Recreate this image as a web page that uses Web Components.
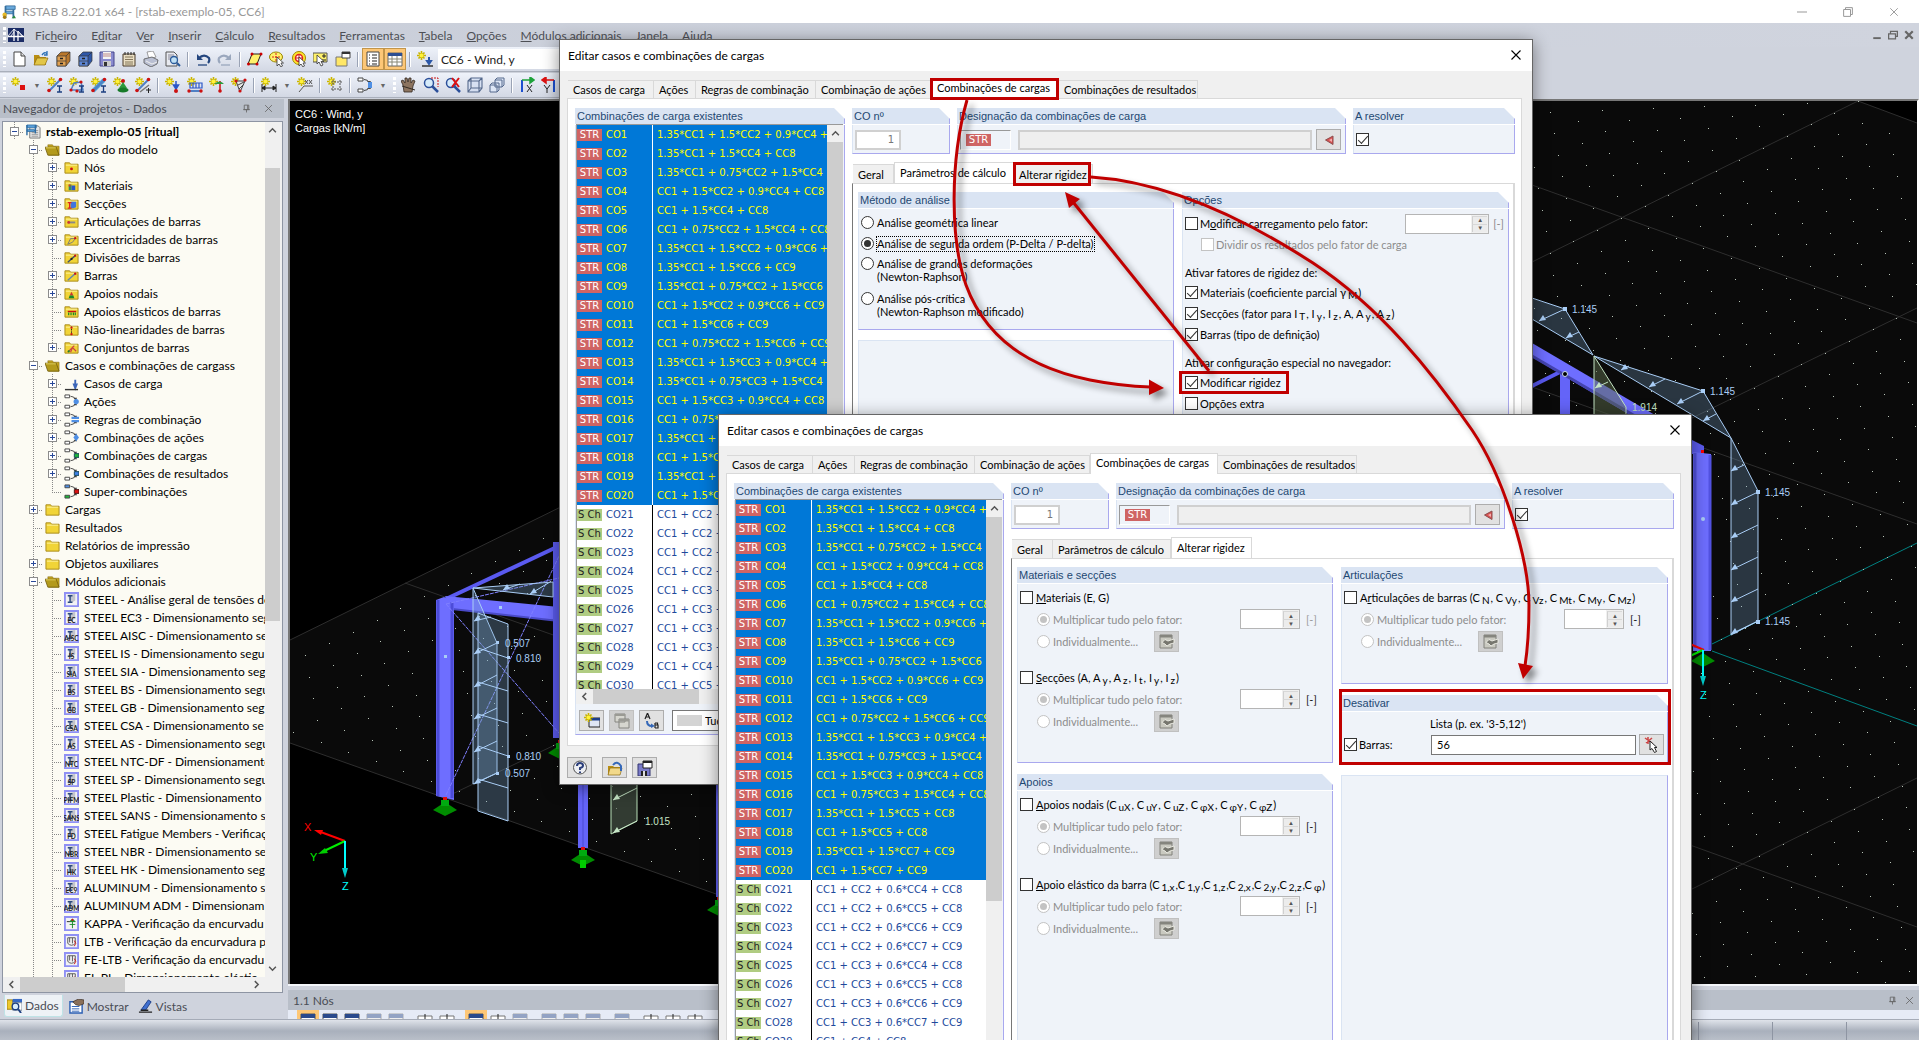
<!DOCTYPE html>
<html lang="pt">
<head>
<meta charset="utf-8">
<title>RSTAB 8.22.01 x64 - [rstab-exemplo-05, CC6]</title>
<style>
html,body{margin:0;height:100%}
body{overflow:hidden;font-family:Lato,"Liberation Sans",sans-serif;font-size:12px;color:#111;background:#cfd3dd}
rs-app{height:100%}
.col{display:flex;flex-direction:column;gap:10px;min-height:0;min-width:0}
.col.wide{gap:11px}
.methods{padding:3px 0 0 2px}
.opt{padding:4px 4px 0 2px;font-size:11px}
.line{display:flex;align-items:center}.fill{flex:1}.unit{margin-left:4px}.off{color:#888}
.cap{margin:8px 0 0;line-height:19px}
.factors{padding:3px 0 0 2px;display:flex;flex-direction:column;gap:15px}
sub{font-size:10px;line-height:0;vertical-align:-2px;margin:0 1px 0 2px}
</style>
</head>
<body>
<rs-app>
  <rs-dialog id="first" style="left:559px;top:39px" subtab="1">
    <div slot="left" class="col">
      <rs-group heading="Método de análise" style="height:138px">
        <div class="methods">
          <rs-choice type="radio">Análise geométrica linear</rs-choice>
          <rs-choice type="radio" checked focused>Análise de segunda ordem (P-Delta / P-delta)</rs-choice>
          <rs-choice type="radio" multi>Análise de grandes deformações<br>(Newton-Raphson)</rs-choice>
          <rs-choice type="radio" multi>Análise pós-crítica<br>(Newton-Raphson modificado)</rs-choice>
        </div>
      </rs-group>
      <rs-group style="flex:1"></rs-group>
    </div>
    <div slot="right" class="col">
      <rs-group heading="Opções" style="flex:1">
        <div class="opt">
          <div class="line"><rs-choice type="checkbox">M<u>o</u>dificar carregamento pelo fator:</rs-choice><span class="fill"></span><rs-spin wide label="Fator do carregamento"></rs-spin><span class="unit off">[-]</span></div>
          <rs-choice type="checkbox" disabled style="padding-left:16px">Dividir os resultados pelo fator de carga</rs-choice>
          <p class="cap">Ativar fatores de rigidez de:</p>
          <rs-choice type="checkbox" checked>Materiais (coeficiente parcial γ<sub>M</sub>)</rs-choice>
          <rs-choice type="checkbox" checked>Secções (fator para I<sub>T</sub>, I<sub>y</sub>, I<sub>z</sub>, A, A<sub>y</sub>, A<sub>z</sub>)</rs-choice>
          <rs-choice type="checkbox" checked>Barras (tipo de definição)</rs-choice>
          <p class="cap">Ativar configuração especial no navegador:</p>
          <rs-choice type="checkbox" checked>Modificar rigidez</rs-choice>
          <rs-choice type="checkbox">Opções extra</rs-choice>
        </div>
      </rs-group>
    </div>
  </rs-dialog>

  <rs-dialog id="second" style="left:718px;top:414px" subtab="2">
    <div slot="left" class="col wide">
      <rs-group heading="Materiais e secções" style="height:196px">
        <div class="factors">
          <rs-factor><u>M</u>ateriais (E, G)</rs-factor>
          <rs-factor on><u>S</u>ecções (A, A<sub>y</sub>, A<sub>z</sub>, I<sub>t</sub>, I<sub>y</sub>, I<sub>z</sub>)</rs-factor>
        </div>
      </rs-group>
      <rs-group heading="Apoios" style="flex:1">
        <div class="factors">
          <rs-factor on><u>A</u>poios nodais (C<sub>uX</sub>, C<sub>uY</sub>, C<sub>uZ</sub>, C<sub>φX</sub>, C<sub>φY</sub>, C<sub>φZ</sub>)</rs-factor>
          <rs-factor on><u>A</u>poio elástico da barra (C<sub>1,x</sub>,C<sub>1,y</sub>,C<sub>1,z</sub>,C<sub>2,x</sub>,C<sub>2,y</sub>,C<sub>2,z</sub>,C<sub>φ</sub>)</rs-factor>
        </div>
      </rs-group>
    </div>
    <div slot="right" class="col wide">
      <rs-group heading="Articulações" style="height:117px">
        <div class="factors">
          <rs-factor on>A<u>r</u>ticulações de barras (C<sub>N</sub>, C<sub>Vy</sub>, C<sub>Vz</sub>, C<sub>Mt</sub>, C<sub>My</sub>, C<sub>Mz</sub>)</rs-factor>
        </div>
      </rs-group>
      <rs-group heading="Desativar" style="height:69px">
        <rs-member-list></rs-member-list>
      </rs-group>
      <rs-group style="flex:1"></rs-group>
    </div>
  </rs-dialog>
  <rs-annotations></rs-annotations>
</rs-app>

<script>
const define = (name, css, html) => customElements.define(name, class extends HTMLElement {
  connectedCallback() {
    if (this.shadowRoot) return;
    const root = this.attachShadow({ mode: 'open' });
    root.innerHTML = `<style>*{box-sizing:border-box}${css}</style>${typeof html === 'function' ? html(this) : html}`;
  }
});

const STAR = '<path d="M4.500 0v9M0 4.500h9M1.500 1.500l6 6M7.500 1.500l-6 6" stroke="#c9b400" stroke-width="1.600"/><circle cx="4.500" cy="4.500" r="2" fill="#fff23a"/>';
const FOLD = '<path d="M1 3h5l1 1.500h8V14H1z" fill="#f1d437" stroke="#a88a1c"/><path d="M2 5.500h12" stroke="#fdf3a0"/>';
const COMB = c => `<g fill="#fff" stroke="#444">${c[1] || '<path d="M1 1h5v3H1zM1 12h5v3H1z"/>'}</g><path d="M7 2.500q4 0 5 3M7 13.500q4 0 5-3" fill="none" stroke="#444"/><path d="M10 4l4 0-1.500 3zM10 12l4 0-1.500-3z" fill="#444"/>${c[0]}`;
const CURSOR = '<path d="M8 6v9l2-2 2 3 1.500-1-1.500-3h2.500z" fill="#fff" stroke="#333" stroke-width=".8"/>';
const MEM = '<path d="M2 14L13 3" stroke="#4f7fc4" stroke-width="2"/><circle cx="2" cy="13.500" r="1.800" fill="#c11"/><circle cx="13.500" cy="2.500" r="1.800" fill="#c11"/>';
const IB = '<path d="M10 9h5M10 15h5M12.500 9v6" stroke="#1d3f80" stroke-width="1.300"/>';
const CAB = (a, b) => `<path d="M2 5l4-4h9v9l-4 5H2z" fill="${b}" stroke="#333" stroke-width=".7"/><path d="M2 5h9v10H2z" fill="${a}" stroke="#333" stroke-width=".7"/><path d="M2 10h9M11 5l4-4" stroke="#333" stroke-width=".7"/><path d="M5 7.500h3M5 12.500h3" stroke="#222" stroke-width="1.400"/>`;
const ICONS = {
  app: '<path d="M4 1h11v4H4zM4 7h9v3H4z" fill="#6aa9dc" stroke="#366f9e"/><path d="M4 1v14M13 5v10" stroke="#366f9e" stroke-width="2"/><circle cx="3" cy="11" r="2.500" fill="#e5b92a"/><circle cx="3" cy="14" r="2" fill="#a57c14"/><path d="M11 15h5l-2-3z" fill="#2c8a3c"/>',
  bridge: '<path d="M0 1h16v14H0z" fill="#1c2d66"/><path d="M0 9.500h16" stroke="#fff" stroke-width="1.500"/><path d="M6 2v12M10 4v10" stroke="#fff" stroke-width="1.300"/><path d="M0 9L6 2l8 7M3 9l3-4M10 4l5 5" fill="none" stroke="#fff" stroke-width=".8"/>',
  new: '<path d="M3 1h7l4 4v10H3z" fill="#fff" stroke="#444"/><path d="M10 1v4h4" fill="#ddd" stroke="#444"/>',
  open: '<path d="M1 14V4h5l1 2h6v8z" fill="#b98e13"/><path d="M1 14l3-7h11l-3 7z" fill="#e2c648" stroke="#8c6a10" stroke-width=".7"/><path d="M9 4q3-4 5-1M14 0v4h-3" fill="none" stroke="#2b6fb4" stroke-width="1.300"/>',
  cabinet: CAB('#e0a050', '#b9772b'), cabinetb: CAB('#5b86d6', '#2e57a8'),
  save: '<path d="M1 1h14v14H1z" fill="#8a8bd0" stroke="#44458a"/><path d="M4 1h8v7H4z" fill="#f4f4f4"/><path d="M4 3h8M4 5h8" stroke="#b88"/><path d="M4 10h8v5H4z" fill="#ccc"/><path d="M5 11h3v4H5z" fill="#333"/>',
  report: '<path d="M2 3h12v12H2z" fill="#eadfc4" stroke="#4a3b28"/><path d="M4 1v3M7 1v3M10 1v3M13 1v3" stroke="#222"/><path d="M4 6h8M4 8.500h8M4 11h8M4 13h8" stroke="#6b5a40" stroke-width=".8"/>',
  print: '<path d="M4 1l6-1 3 6-7 2z" fill="#fff" stroke="#777" stroke-width=".7"/><path d="M1 8l8-2 6 3-1 4-6 3-7-4z" fill="#b9bfd2" stroke="#555" stroke-width=".8"/><path d="M3 10l6 3 5-2" fill="none" stroke="#eee"/>',
  preview: '<path d="M1 1h8l3 3v11H1z" fill="#e8eaf0" stroke="#555"/><path d="M3 4h6M3 6h6M3 8h4" stroke="#889"/><circle cx="9" cy="9" r="3.500" fill="#bfe0f5" stroke="#2a5a9a" stroke-width="1.300"/><path d="M12 12l3 3" stroke="#2a5a9a" stroke-width="2"/>',
  undo: '<path d="M2 3v6h6z" fill="#24467e"/><path d="M3.500 7.500Q9 2 14 7q1 3-1 5" fill="none" stroke="#24467e" stroke-width="2.200"/><path d="M3 14h9" stroke="#24467e" stroke-width="1.300"/>',
  redo: '<path d="M14 3v6H8z" fill="#9aa7bd"/><path d="M12.500 7.500Q7 2 2 7q-1 3 1 5" fill="none" stroke="#9aa7bd" stroke-width="2.200"/><path d="M4 14h9" stroke="#9aa7bd" stroke-width="1.300"/>',
  quad: '<path d="M5 3h9l-4 10H1z" fill="#fff26b" stroke="#222"/><g fill="#c00"><circle cx="5" cy="3" r="1.500"/><circle cx="14" cy="3" r="1.500"/><circle cx="10" cy="13" r="1.500"/><circle cx="1.500" cy="13" r="1.500"/></g>',
  ell: '<ellipse cx="7" cy="6" rx="6.500" ry="5" fill="#fff26b" stroke="#998400"/><path d="M7 2v8M3 6h8" stroke="#d22" stroke-dasharray="2 1"/>' + CURSOR,
  ring: '<circle cx="8" cy="7" r="6.500" fill="#ffe52e" stroke="#a08800"/><circle cx="8" cy="7" r="3.500" fill="#fff" stroke="#d22" stroke-width="1.500"/><path d="M8 4v6M5 7h6" stroke="#d22"/>' + CURSOR,
  selr: '<path d="M0 2h14v9H0z" fill="#fff26b" stroke="#555"/><path d="M11 3v4M9 5h4M9 9h4" stroke="#222"/><path d="M4 4v9l2-2 2 4 2-1-2-3.500h3z" fill="#fff" stroke="#333" stroke-width=".8"/>',
  win: '<path d="M1 6h11v9H1z" fill="#ffe766" stroke="#777"/><path d="M7 1h8v6H7z" fill="#fff" stroke="#444"/><path d="M7 1h8v2H7z" fill="#333"/>',
  tree: '<path d="M2 1h12v14H2z" fill="#fff" stroke="#444"/><path d="M4 4h1M4 7h1M4 10h1M4 13h1M7 4h5M7 7h5M7 10h5M7 13h5" stroke="#222"/>',
  tab: '<path d="M1 2h14v13H1z" fill="#fff" stroke="#666"/><path d="M1 2h14v3H1z" fill="#2d4f92"/><path d="M1 8h14M1 11h14M5 5v10M10 5v10" stroke="#887"/>',
  load: STAR + '<path d="M12 6v5M10 10l2 3 2-3z" stroke="#2b57a8" stroke-width="2" fill="#2b57a8"/><path d="M5 15h11" stroke="#333" stroke-width="1.500"/>',
  node: STAR + '<path d="M9 8h5v5H9z" fill="#d11"/>',
  mem1: STAR + MEM + IB, mem2: STAR + '<path d="M2 13L5 6l7-1 2 8z" fill="none" stroke="#4f7fc4" stroke-width="1.500"/><g fill="#c11"><circle cx="2" cy="13" r="1.600"/><circle cx="12" cy="5" r="1.600"/><circle cx="8" cy="14" r="1.600"/></g>' + IB,
  mem3: STAR + '<path d="M2 14L13 3" stroke="#4fa0d4" stroke-width="4"/>' + MEM + IB,
  supp: STAR + '<circle cx="10" cy="4" r="2" fill="#c11"/><path d="M10 5l4 6H6z" fill="#2c9a3c"/><ellipse cx="10" cy="13" rx="5.500" ry="2.500" fill="#177a2a"/>',
  mem4: STAR + MEM + '<path d="M5 15L14 8" stroke="#777" stroke-width="1.500"/><path d="M11 13h5M13.500 11v5" stroke="#222"/>',
  nload: STAR + '<path d="M11 4v6M8.500 8l2.500 4 2.500-4z" stroke="#2b57c8" stroke-width="1.500" fill="#2b57c8"/><circle cx="11" cy="14" r="2" fill="#c11"/>',
  mload: STAR + '<path d="M3 6h12v5H3zM6 6v5M9 6v5M12 6v5" fill="none" stroke="#2b57c8" stroke-width="1.200"/><path d="M2 14h13" stroke="#4f7fc4" stroke-width="2"/><g fill="#c11"><circle cx="2" cy="14" r="1.700"/><circle cx="14" cy="14" r="1.700"/></g>',
  tload: STAR + '<path d="M11 4v9" stroke="#c11" stroke-width="1.500"/><path d="M5 7q6-5 10 0z" fill="#2c9a3c"/><circle cx="11" cy="14" r="1.800" fill="#c11"/>',
  imp: STAR + '<path d="M5 4h9l-5 11z" fill="#e8e8e8" stroke="#444"/><path d="M7 8l6-3M8 12l5-5" stroke="#444"/><g fill="#c11"><circle cx="5" cy="4" r="1.600"/><circle cx="14" cy="3" r="1.600"/><circle cx="9" cy="14" r="1.600"/></g>',
  dim: STAR + '<path d="M1 7v8M15 7v8M1 11h14M1 11l3-2v4zM15 11l-3-2v4z" stroke="#222" fill="#222"/>',
  note: STAR + '<path d="M2 15l5-6h9" fill="none" stroke="#555"/><path d="M8 3l3 4M11 3L8 7M12 3l3 4M15 3l-3 4" stroke="#555"/>',
  grid: STAR + '<path d="M4 5h12M4 12h12M6 3v12M13 3v12" stroke="#555" stroke-dasharray="2 1"/>',
  comb: COMB(['<path d="M11 5h4v6h-4z" fill="#4f8fe4"/>']),
  hand: '<path d="M3 15L2 8 0 4l2-1 2 3V1h2l1 4 1-4h2v5l2-3 2 1-2 5-1 6z" fill="#8c7460" stroke="#332a22" stroke-width=".8"/><path d="M1 9l13 4" stroke="#332a22"/>',
  zoom: '<circle cx="6" cy="6" r="4.500" fill="#d6ebfa" stroke="#2b4f9a" stroke-width="1.500"/><path d="M9 9l6 6" stroke="#2b4f9a" stroke-width="2.500"/><path d="M8 1h7v9" fill="none" stroke="#c11" stroke-dasharray="2 1"/>',
  zoomx: '<circle cx="6" cy="6" r="4.500" fill="#d6ebfa" stroke="#2b4f9a" stroke-width="1.500"/><path d="M9 9l6 6" stroke="#2b4f9a" stroke-width="2.500"/><path d="M7 1l7 9M14 1L7 10" stroke="#d11" stroke-width="2"/>',
  cube: '<path d="M1 4l3-3h11v10l-3 4H1zM1 4h11v11M12 4l3-3M4 1v10h11M4 11l-3 4" fill="#cfdcf3" fill-opacity=".6" stroke="#55698c" stroke-width="1.100"/>',
  cubes: '<path d="M6 3l2-2h7v7l-2 2H6zM1 8l2-2h7v7l-2 2H1z" fill="#dde6f6" stroke="#55698c"/><path d="M1 8h7v7M6 3h7v7" fill="none" stroke="#55698c"/>',
  ax: '<path d="M3 15V3" stroke="#1c4fd0" stroke-width="2"/><path d="M3 3h10M11 0l4 3-4 3z" stroke="#1da23a" stroke-width="1.500" fill="#1da23a"/><path d="M8 8l5 7M13 8l-5 7" stroke="#222"/>',
  ay: '<path d="M13 15V3" stroke="#1c4fd0" stroke-width="2"/><path d="M13 3H3M5 0L1 3l4 3z" stroke="#d11" stroke-width="1.500" fill="#d11"/><path d="M3 8l3 4M9 8l-3 4v4" stroke="#222" fill="none"/>',
  doc: '<path d="M4 2h9l2 2v11H4z" fill="#e6e6e6" stroke="#777"/><path d="M6 7h7M6 9h7M6 11h7M6 13h7" stroke="#999"/><path d="M1 1h10v3H1zM1 6h8v2H1z" fill="#58a0da" stroke="#2d6ca2" stroke-width=".8"/><path d="M1 1v11M10 1v9" stroke="#2d6ca2" stroke-width="1.500"/>',
  fopen: '<path d="M3 3h5l1 1.500h6V14H4z" fill="#c9a920" stroke="#806a10" stroke-width=".6"/><path d="M0 5.500h12l3 8.500H3z" fill="#b39a1c" stroke="#6d5a0c" stroke-width=".8"/><path d="M1 6.200h10.500" stroke="#e8d660"/>',
  fold: FOLD,
  f1: FOLD + '<circle cx="8" cy="9.500" r="1.500" fill="#c11"/>',
  f2: FOLD + '<path d="M5 7h3v6H5z" fill="#2a8f6a"/><path d="M8 8h4v5H8z" fill="#2b57c8"/><path d="M5 7h2v2H5z" fill="#d33"/>',
  f3: FOLD + '<path d="M7 6h6v6l-3 1H7z" fill="#3f74dd"/><path d="M4 7h4M4 13h4M6 7v6" stroke="#d22" stroke-width="1.300"/>',
  f4: FOLD + '<path d="M4 9h8" stroke="#888" stroke-width="2"/><circle cx="5" cy="9" r="1.500" fill="#c33"/>',
  f5: FOLD + '<path d="M4 13l3-6h5l-3 4z" fill="none" stroke="#777"/><circle cx="12" cy="6.500" r="1.300" fill="#c11"/>',
  f6: FOLD + '<path d="M4 13l8-7" stroke="#456" stroke-width="1.500"/><circle cx="8" cy="9.500" r="1.200" fill="#222"/><circle cx="12" cy="6" r="1.200" fill="#c11"/>',
  f7: FOLD + '<path d="M4 13l8-7" stroke="#68a" stroke-width="1.500"/><circle cx="12" cy="6" r="1.300" fill="#c11"/>',
  f8: FOLD + '<path d="M8 6l2 4H6z" fill="#c33"/><path d="M5 13l1-3h4l1 3z" fill="#178a2a"/>',
  f9: FOLD + '<path d="M4 8h9" stroke="#c11" stroke-width="1.500"/><path d="M5 9v3M7.500 9v3M10 9v3M12 9v3" stroke="#178a2a" stroke-width="1.300"/>',
  f10: FOLD + '<path d="M8 5v8" stroke="#222" stroke-dasharray="1.500 1"/><circle cx="8" cy="6" r="1.200" fill="#c11"/><circle cx="8" cy="13" r="1.200" fill="#c11"/>',
  f11: FOLD + '<path d="M4 13l7-7M7 13l2-5 4 4" fill="none" stroke="#c44" stroke-width="1.300"/><circle cx="5" cy="12" r="1.200" fill="#178a2a"/>',
  lc: '<path d="M12 4v5M10.500 9l1.500 4 1.500-4z" stroke="#3c66b8" stroke-width="2" fill="#3c66b8"/><path d="M1 14.500h14" stroke="#333" stroke-width="1.500"/>',
  c1: COMB(['<circle cx="13" cy="8" r="2.800" fill="#4f8fe4"/>']),
  c2: COMB(['<path d="M8 5h8v2.500H8zM8 8.500h8V11H8z" fill="#4f8fe4"/>']),
  c3: COMB(['<path d="M13 4l3 4-3 4-3-4z" fill="#4f8fe4"/>']),
  c4: COMB(['<path d="M11 6h5v4h-5z" fill="#1fb53a" stroke="#145"/>']),
  c5: COMB(['<path d="M11 6h5v4h-5z" fill="#3f7fe4" stroke="#145"/>']),
  c6: COMB(['<path d="M11 6h5v4h-5z" fill="#d11" stroke="#411"/>', '<path d="M1 1h5v3H1z" fill="#4f8fe4"/><path d="M1 12h5v3H1z" fill="#1fb53a"/>']),
  data: '<path d="M0 2h6v10H0z" fill="#edc92d" stroke="#a08010"/><path d="M6 1h10v4H6z" fill="#3568c4"/><path d="M6 5h10v8H6z" fill="#fff" stroke="#789"/><circle cx="9" cy="9" r="3.500" fill="#d8ecfa" stroke="#1d3f80" stroke-width="1.500"/><path d="M12 12l3 4" stroke="#1d3f80" stroke-width="2"/>',
  show: '<path d="M1 3h13v12H1z" fill="#fff" stroke="#2b5fb4" stroke-width="1.500"/><path d="M3 8h8M3 10.500h8M3 13h8" stroke="#2b5fb4"/><path d="M4 3l6-3 6 1v4l-5 2-4-1z" fill="#8a705a" stroke="#33281e" stroke-width=".7"/>',
  view: '<path d="M3 12L11 1l3 2-6 9z" fill="#3f6fd0" stroke="#1c3d88"/><path d="M1 14h14M3 12h8" stroke="#222" stroke-width="1.500"/>',
  add: '<path d="M5 5h11v9H5z" fill="#dfe6f4" stroke="#222"/><path d="M5 5h11v2.500H5z" fill="#1c3f8a"/>' + STAR,
  copy: '<path d="M1 1h10v8H1zM5 6h10v9H5z" fill="#d6d6cf" stroke="#858580"/><path d="M1 1h10v2H1zM5 6h10v2.500H5z" fill="#9a9a94"/>',
  ab: '<path d="M1 6L3.500 0 6 6M2 4h3M11 10v5M11 10h2.500v2H11h3v3h-3" fill="none" stroke="#222" stroke-width="1.200"/><path d="M3 8q0 5 5 5" fill="none" stroke="#3568b8" stroke-width="2"/><path d="M7 10.500l4 2.500-4 2z" fill="#3568b8"/>',
  help: '<circle cx="8" cy="7.500" r="6.500" fill="#eef0f4" stroke="#555"/><path d="M5 6q0-3 3-3t3 2.500Q11 7.500 8 8v2M8 11.500v1.500" fill="none" stroke="#2a3d7a" stroke-width="2"/>',
  book: '<path d="M1 15V6h5l1 1h6v8z" fill="#b98e13"/><path d="M1 15l2-7h12l-2 7z" fill="#f2d98a" stroke="#8c6a10" stroke-width=".7"/><path d="M6 5q4-5 8 1v5" fill="none" stroke="#3568b8" stroke-width="2"/>',
  saveas: '<path d="M1 4h12v12H1z" fill="#7a7bc8" stroke="#333470"/><path d="M4 11h6v5H4z" fill="#222"/><path d="M6 11h2v5H6z" fill="#ddd"/><path d="M6 1h9v7H6z" fill="#fff" stroke="#222"/><path d="M6 1h9v2H6z" fill="#222"/>',
  play: '<path d="M12 4v8.500L4.500 8z" fill="#d85050" stroke="#8c4f4f"/><path d="M11 6.500v3.500L8 8z" fill="#f5b0b0"/>',
  edit: '<path d="M1 2h12v13H1z" fill="#c9c9c0" stroke="#80807a"/><path d="M1 2h12v2.500H1z" fill="#85857e"/><path d="M3 9.500l3-3 3 1.500 6-2v4l-4 1-3 2-2-2z" fill="#77776f" stroke="#efefe8" stroke-width=".9"/>',
  pick: '<path d="M1 1l7 5M8 1L2 6M4 0v7" stroke="#c44" stroke-width="1.500"/><path d="M6 4v9l2-1.500 2.500 4 2-1-2-4H13z" fill="#fff" stroke="#222"/>',
  x: '<path d="M2 2l12 12M14 2L2 14" stroke="currentColor" stroke-width="1.500" fill="none"/>',
  pin: '<path d="M4 2h8v8H4zM2 10h12M8 10v5M10 2v8" stroke="currentColor" stroke-width="1.500" fill="none"/>',
  min: '<path d="M0 8h16" stroke="currentColor" stroke-width="1.600"/>',
  restore: '<path d="M1 4h11v11H1zM4 4V1h11v11h-3" stroke="currentColor" stroke-width="1.600" fill="none"/>',
  minb: '<path d="M2 13h12" stroke="currentColor" stroke-width="3"/>',
  restoreb: '<path d="M1 6h11v8H1zM4 5V2h11v8h-3" stroke="currentColor" stroke-width="2" fill="none"/>',
  xb: '<path d="M2 2l12 12M14 2L2 14" stroke="currentColor" stroke-width="3.500" fill="none"/>',
  up: '<path d="M2 11l6-6 6 6" stroke="currentColor" stroke-width="2.600" fill="none"/>',
  down: '<path d="M2 5l6 6 6-6" stroke="currentColor" stroke-width="2.600" fill="none"/>',
  left: '<path d="M11 2L5 8l6 6" stroke="currentColor" stroke-width="2.600" fill="none"/>',
  right: '<path d="M5 2l6 6-6 6" stroke="currentColor" stroke-width="2.600" fill="none"/>',
  g1: '<path d="M1 8h14v8H1z" fill="#fff" stroke="#555"/><path d="M1 8h14v4H1z" fill="#2a4a8c"/>',
  g2: '<path d="M1 8h14v8H1z" fill="#eee" stroke="#aaa"/><path d="M1 8h14v4H1z" fill="#93a3c4"/>',
  g3: '<path d="M1 10h14v6H1z" fill="#fff" stroke="#777"/><path d="M8 8v8" stroke="#222"/>'
};
define('rs-icon', ':host{display:block;width:var(--icon,16px);height:var(--icon,16px);flex:none}svg{display:block;width:100%;height:100%}', el => {
  const n = el.getAttribute('name'), m = el.getAttribute('mark');
  if (m !== null) return `<svg viewBox="0 0 16 16" aria-hidden="true"><path d="M1 1h14v14H1z" fill="#f2f2f4" stroke="#8f90f4" stroke-width="2"/>${m[0] === '!' ?
    (m === '!k' ? '<path d="M9 3v10M6 6q3-4 6 0zM6 9h6" stroke="#178a2a" fill="#178a2a"/><circle cx="9" cy="4" r="1.200" fill="#c11"/><path d="M3 6h3" stroke="#222"/>'
    : '<path d="M4 4h8v6q-4 4-8 0zM6 4v5M9 4v6" fill="none" stroke="#555"/><path d="M11 7q3 3 0 6" stroke="#c11" fill="none"/>')
    : `<path d="M4 3l8-1v7l-5 3z" fill="#c2c4cc"/><path d="M4 4h5M6.500 4v6M4 11h5" stroke="#2c4a7c" stroke-width="1.500"/>${m ? `<text x="8" y="14" font-size="7" font-weight="bold" text-anchor="middle" fill="#222">${m}</text>` : ''}`}</svg>`;
  return `<svg viewBox="0 0 16 16" fill="none" aria-hidden="true">${ICONS[n] || ''}</svg>`;
});

define('rs-scroll', `:host{display:flex;background:#f0f0f0;color:#555;align-items:center;--icon:9px}
:host([dir=v]){flex-direction:column;width:15px}:host([dir=v][list]){width:16px}:host([dir=h]){height:15px}
.a{flex:none;display:grid;place-items:center;width:17px;height:17px}.t{background:#cdcdcd;flex:none}
:host([dir=v]) .t{width:100%}:host([dir=h]) .t{height:100%}.r{flex:1}`, el => {
  const v = el.getAttribute('dir') === 'v', s = el.getAttribute('size');
  return `<span class="a"><rs-icon name="${v ? 'up' : 'left'}"></rs-icon></span><span style="${v ? 'height' : 'width'}:${s}px;margin:${v ? el.getAttribute('skip') + 'px 0 0' : 0}" class="t"></span><span class="r"></span><span class="a"><rs-icon name="${v ? 'down' : 'right'}"></rs-icon></span>`;
});

define('rs-titlebar', `:host{display:flex;align-items:center;height:23px;background:#fff;color:#999;padding:0 20px 0 2px;--icon:14px}
h1{font:inherit;margin:0 0 0 6px;flex:1;font-size:12px}button{all:unset;margin-left:36px;--icon:10px}`,
  `<rs-icon name="app"></rs-icon><h1>RSTAB 8.22.01 x64 - [rstab-exemplo-05, CC6]</h1><button aria-label="Minimizar"><rs-icon name="min"></rs-icon></button><button aria-label="Restaurar"><rs-icon name="restore"></rs-icon></button><button aria-label="Fechar"><rs-icon name="x"></rs-icon></button>`);

const GRIP = 'width:3px;height:16px;flex:none;background:repeating-linear-gradient(#fff 0 3px,transparent 3px 5px);margin:0 2px 0 3px';
define('rs-menubar', `:host{display:flex;align-items:center;height:24px;background:linear-gradient(90deg,#c9ced9,#d0d4de);color:#4d4f55;padding-right:5px}
i{${GRIP}}nav{display:flex;gap:14px;margin-left:11px;flex:1}a{color:inherit;text-decoration:none}u{text-underline-offset:1px}
button{all:unset;margin-left:6px;--icon:10px;color:#666}`,
  `<i></i><rs-icon name="bridge"></rs-icon><nav>${['Fic<u>h</u>eiro', 'E<u>d</u>itar', 'V<u>e</u>r', '<u>I</u>nserir', '<u>C</u>álculo', '<u>R</u>esultados', '<u>F</u>erramentas', '<u>T</u>abela', '<u>O</u>pções', '<u>M</u>ódulos adicionais', '<u>J</u>anela', '<u>A</u>juda'].map(t => `<a href="#">${t}</a>`).join('')}</nav><button aria-label="Minimizar janela"><rs-icon name="minb"></rs-icon></button><button aria-label="Restaurar janela"><rs-icon name="restoreb"></rs-icon></button><button aria-label="Fechar janela"><rs-icon name="xb"></rs-icon></button>`);

define('rs-toolbar', `:host{display:flex;align-items:center;height:25px;width:56%;background:linear-gradient(#eef2fa,#d3d8e4);border-bottom:1px solid #a9afbb;margin-bottom:1px}
i{${GRIP}}button{all:unset;width:22px;height:22px;display:grid;place-items:center;flex:none;box-sizing:border-box}
button.on{background:#fdc777;border:1px solid #c2954a}button.dd{width:14px;font-size:7px;color:#666}
.sep{width:1px;height:15px;background:#9aa3b5;margin:0 3px;border-right:1px solid #fff;box-sizing:content-box;flex:none}
select{appearance:none;border:0;background:#fff;height:20px;width:150px;font:inherit;padding:0 3px;margin-left:2px;color:#222}`, el =>
  '<i></i>' + el.getAttribute('items').split(' ').map(n => n === '|' ? '<span class="sep"></span>' : n === ':' ? '<i></i>' : n === 'v' ? '<button class="dd" aria-label="Mais opções">▼</button>' : n === '#' ? '<select aria-label="Caso de carga"><option>CC6 - Wind, y</option></select>' : `<button aria-label="${n.replace('*', '')}" class="${n[0] === '*' ? 'on' : ''}"><rs-icon name="${n.replace('*', '')}"></rs-icon></button>`).join(''));

const TREE = [[0, '-', 'doc', 'rstab-exemplo-05 [ritual]'], [1, '-', 'fopen', 'Dados do modelo'], [2, '+', 'f1', 'Nós'], [2, '+', 'f2', 'Materiais'], [2, '+', 'f3', 'Secções'], [2, '+', 'f4', 'Articulações de barras'], [2, '+', 'f5', 'Excentricidades de barras'], [2, '', 'f6', 'Divisões de barras'], [2, '+', 'f7', 'Barras'], [2, '+', 'f8', 'Apoios nodais'], [2, '', 'f9', 'Apoios elásticos de barras'], [2, '', 'f10', 'Não-linearidades de barras'], [2, '+', 'f11', 'Conjuntos de barras'], [1, '-', 'fopen', 'Casos e combinações de cargass'], [2, '+', 'lc', 'Casos de carga'], [2, '+', 'c1', 'Ações'], [2, '+', 'c2', 'Regras de combinação'], [2, '+', 'c3', 'Combinações de ações'], [2, '+', 'c4', 'Combinações de cargas'], [2, '+', 'c5', 'Combinações de resultados'], [2, '', 'c6', 'Super-combinações'], [1, '+', 'fold', 'Cargas'], [1, '', 'fold', 'Resultados'], [1, '', 'fold', 'Relatórios de impressão'], [1, '+', 'fold', 'Objetos auxiliares'], [1, '-', 'fopen', 'Módulos adicionais'],
  ...[['', 'STEEL - Análise geral de tensões de'], ['EC', 'STEEL EC3 - Dimensionamento seg'], ['AISC', 'STEEL AISC - Dimensionamento se'], ['IS', 'STEEL IS - Dimensionamento segu'], ['SIA', 'STEEL SIA - Dimensionamento seg'], ['BS', 'STEEL BS - Dimensionamento segu'], ['GB', 'STEEL GB - Dimensionamento seg'], ['CSA', 'STEEL CSA - Dimensionamento se'], ['AS', 'STEEL AS - Dimensionamento segu'], ['NTC', 'STEEL NTC-DF - Dimensionamento'], ['SP', 'STEEL SP - Dimensionamento segu'], ['PIFM', 'STEEL Plastic - Dimensionamento'], ['SANS', 'STEEL SANS - Dimensionamento s'], ['FD', 'STEEL Fatigue Members - Verificaç'], ['NBR', 'STEEL NBR - Dimensionamento se'], ['HK', 'STEEL HK - Dimensionamento seg'], ['EC9', 'ALUMINUM - Dimensionamento s'], ['ADM', 'ALUMINUM ADM - Dimensionam'], ['!k', 'KAPPA - Verificação da encurvadu'], ['!l', 'LTB - Verificação da encurvadura p'], ['!f', 'FE-LTB - Verificação da encurvadu'], ['!e', 'EL-PL - Dimensionamento elástic']].map(m => [2, '', null, m[1], m[0]])];
define('rs-navigator', `:host{display:flex;flex-direction:column;width:284px;background:#cfd3dd;flex:none;min-height:0}
header{display:flex;align-items:center;height:19px;background:#b9bfc9;padding:0 6px 0 3px;color:#4a4d55;margin-bottom:3px}
header span{flex:1}header rs-icon{--icon:9px;margin-left:8px;color:#666}
.box{flex:1;min-height:0;margin:0 1px 0 2px;border:1px solid #8e95a3;display:flex;flex-direction:column;background:#f0f0f0;padding-right:2px}
.top{flex:1;min-height:0;display:flex}ul{flex:1;min-width:0;margin:0;padding:0 0 0 2px;list-style:none;background:#fcfbf3;overflow:hidden}
li{display:flex;height:18px;align-items:center;white-space:nowrap;color:#000}li.b{font-weight:bold}
.g{width:19px;height:18px;flex:none;display:grid;place-items:center}
.v{background:repeating-linear-gradient(#888 0 1px,transparent 1px 2px) 9px 0/1px 100% no-repeat}
.v.h,.v.half{background:repeating-linear-gradient(#888 0 1px,transparent 1px 2px) 9px 0/1px 100% no-repeat,repeating-linear-gradient(90deg,#888 0 1px,transparent 1px 2px) 9px 10px/10px 1px no-repeat}
.v.half{background-size:1px 10px,10px 1px}
.e{width:9px;height:9px;border:1px solid #8c8c8c;background:#fff;display:grid;place-items:center}
.e::before{content:"";grid-area:1/1;width:5px;height:1px;background:#2a4a9a}.e.p::after{content:"";grid-area:1/1;width:1px;height:5px;background:#2a4a9a}
rs-icon{--icon:15px;margin:0 5px 0 2px}
nav{display:flex;align-items:center;height:26px;gap:4px;padding:0 4px}nav a{display:flex;align-items:center;color:#4a4d55;text-decoration:none;height:22px;padding-right:3px}
nav rs-icon{margin:0 3px 0 2px}nav a.on{background:#eef2f6;border:1px solid #bfe3e6;border-top:0;border-radius:0 0 3px 3px}`, () => `<header><span>Navegador de projetos - Dados</span><rs-icon name="pin"></rs-icon><rs-icon name="x"></rs-icon></header>
<div class="box"><div class="top"><ul role="tree">${TREE.map((r, i) => {
    const lastInGroup = !TREE[i + 1] || TREE[i + 1][0] < r[0];
    return `<li role="treeitem" class="${r[0] ? '' : 'b'}">${r[0] ? '<span class="g"></span>' : ''}${r[0] > 1 ? '<span class="g v"></span>' : ''}<span class="g v ${lastInGroup && r[0] === 2 ? 'half' : 'h'}">${r[1] ? `<span class="e ${r[1] === '+' ? 'p' : ''}"></span>` : ''}</span><rs-icon ${r[2] ? `name="${r[2]}"` : `mark="${r[4]}"`}></rs-icon><span>${r[3]}</span></li>`;
  }).join('')}</ul><rs-scroll dir="v" skip="29" size="453"></rs-scroll></div><rs-scroll dir="h" size="105" style="margin-right:15px"></rs-scroll></div>
<nav><a href="#" class="on"><rs-icon name="data"></rs-icon>Dados</a><a href="#"><rs-icon name="show"></rs-icon>Mostrar</a><a href="#"><rs-icon name="view"></rs-icon>Vistas</a></nav>`);

/* Model view: the ground grid is a two-vector lattice, drawn in window units. */
define('rs-viewport', `:host{display:block;flex:1;min-height:0;background:#000;overflow:hidden;border:1px solid #777;border-width:2px 2px 0 2px;border-right-color:#fff}
svg{display:block;width:100%;height:100%}text{font:10px "Liberation Sans Narrow","Liberation Sans",sans-serif}.n text{font:11px "Liberation Sans",sans-serif}`, () => {
  const arrow = (x1, y1, x2, y2, c = '#a9cdf5') => `<path d="M${x1} ${y1}L${x2} ${y2}" stroke="${c}"/><path d="M${x2} ${y2}l4-6 3 5z" fill="${c}"/>`;
  let dots = '';
  for (let i = -8; i < 75; i++) for (let j = -75; j < 60; j++) {
    const x = 1858 - 23.72 * i + 27.55 * j, y = 101 + 11.7 * i + 9.95 * j;
    if (x < 290 || x > 1917 || y < 101 || y > 984 || y < 640 - .4913 * (x - 290) || y > 743 + .3575 * (x - 290) || y < 101 + .37 * (x - 1858)) continue;
    dots += `M${Math.round(x)} ${Math.round(y)}h1v1h-1z`;
  }
  const supp = (x, y) => `<path d="M${x - 12} ${y + 2}L${x} ${y - 6}l12 8-12 6z" fill="#008c00"/><path d="M${x - 4} ${y - 8}h8v6h-8z" fill="#00aa10"/><path d="M${x - 2} ${y - 11}h4v3h-4z" fill="#e01010"/>`;
  const L = (c, ...p) => p.map(q => `<path d="M${q[0]} ${q[1]}L${q[2]} ${q[3]}" stroke="${c}"/>`).join('');
  return `<svg viewBox="290 101 1627 883" preserveAspectRatio="xMinYMin slice" fill="none">
<path d="M290 640L1387 101H1858L1917 123V984H970L290 743z" fill="#0a0a0a"/>
${L('#2e2e2e', [290, 640, 1387, 101], [290, 743, 970, 984], [405, 583, 559, 637], [446, 797, 559, 743], [1858, 101, 1532, 262], [1858, 101, 1917, 123], [1532, 185, 1917, 323], [1917, 308, 1690, 419], [1532, 387, 1917, 524], [1690, 845, 1917, 927], [1690, 890, 1917, 778])}
${L('#008080', [1712, 644, 1917, 543], [1712, 651, 1917, 726])}
<path d="${dots}" fill="#b8c4b8"/>
<path d="M446 599L559 546" stroke="#5a5af0" stroke-width="4"/>
<path d="M445 596L559 607V621L452 609z" fill="#6e6eff"/><path d="M452 609L559 621" stroke="#4a4ac8" stroke-width="2"/>
<path d="M436 600l8-3 10 5V800l-18-4z" fill="#6e6eff"/><path d="M438 600v196M452 602v196" stroke="#4c4cd8" stroke-width="3"/>
<path d="M553 542h7v196h-7z" fill="#5c5cf0"/>
<path d="M446 604L559 733M446 795L559 556M446 604L559 578" stroke="#8080ff" stroke-dasharray="4 1"/>
<path d="M444 655h3v3h-3zM499 606h3v3h-3z" fill="#a9cdf5"/>${supp(445, 808)}${supp(560, 751)}
<g stroke="#a9cdf5" fill="#7fa8d0" fill-opacity=".3"><path d="M473 588L497 643V773L473 784z"/><path d="M478 613L508 624V821L478 811z"/><path d="M473 588L553 582V597z"/></g>
${arrow(497, 643, 474, 654)}${arrow(497, 675, 474, 687)}${arrow(497, 708, 474, 719)}${arrow(497, 741, 474, 752)}${arrow(497, 773, 474, 784)}
${L('#a9cdf5', [478, 648, 508, 658], [478, 682, 508, 691], [478, 714, 508, 723], [478, 746, 508, 756], [478, 779, 508, 788])}
${arrow(491, 617, 474, 621)}${arrow(520, 584, 503, 590)}${arrow(550, 582, 530, 594)}
<path d="M496 641h3v3h-3zM507 656h3v3h-3zM507 755h3v3h-3zM496 772h3v3h-3z" fill="#a9cdf5"/>
<g fill="#a9cdf5"><text x="505" y="647">0.507</text><text x="516" y="662">0.810</text><text x="516" y="760">0.810</text><text x="505" y="777">0.507</text></g>
<path d="M578 780h10v68h-10zM716 780h5v117h-5z" fill="#6464f8"/><path d="M583 780v68" stroke="#4a4ad0"/>${supp(583, 858)}${supp(719, 908)}<path d="M580 860h6v8h-6z" fill="#0c0"/>
<path d="M611 780V834L637 821V780z" fill="#4c5c4c" fill-opacity=".6" stroke="#b8e0b8"/>${arrow(637, 788, 613, 800, '#c4e4c4')}${arrow(637, 821, 613, 833, '#c4e4c4')}<text x="645" y="825" fill="#c4e4c4">1.015</text>
<path d="M345 841L318 831" stroke="red" stroke-width="2"/><path d="M314 830l9 0-2 5z" fill="red"/><path d="M345 841L322 852" stroke="#0e0" stroke-width="2"/><path d="M318 854l7-6 3 5z" fill="#0c0"/><path d="M345 841V872" stroke="#0ff" stroke-width="2"/><path d="M342 868h6l-3 10z" fill="#0cc"/>
<g class="n"><text x="304" y="831" fill="red">X</text><text x="310" y="861" fill="#0e0">Y</text><text x="342" y="890" fill="#0ff">Z</text></g>
<path d="M1532 386L1562 371" stroke="#5a5af0" stroke-width="4"/><path d="M1560 373h10v42h-10z" fill="#6464f8"/><path d="M1532 343L1655 415H1630L1532 357z" fill="#6e6eff"/><path d="M1532 356L1635 416" stroke="#4444b0" stroke-width="3"/>
<circle cx="1565" cy="374" r="2.500" fill="#000" stroke="#cde"/>
<g stroke="#a9cdf5" fill="#7fa8d0" fill-opacity=".28"><path d="M1532 298L1565 309 1593 355 1532 319"/><path d="M1594 356L1703 391 1731 438z"/><path d="M1731 438L1758 491V621L1731 635z"/></g>
<path d="M1594 356V415H1626V407z" fill="#5c6c4c" fill-opacity=".5" stroke="#c4e4c4"/>
${arrow(1565, 309, 1539, 321)}${arrow(1579, 332, 1566, 338)}${arrow(1629, 366, 1621, 370)}${arrow(1665, 379, 1649, 387)}${arrow(1703, 391, 1677, 404)}${arrow(1716, 414, 1703, 421)}${arrow(1744, 465, 1731, 471)}
${[492, 525, 557, 589, 621].map(y => arrow(1758, y, 1731, y + 13)).join('')}${arrow(1608, 382, 1595, 388, '#c4e4c4')}
<g fill="#a9cdf5"><path d="M1563 307h4v4h-4zM1701 389h4v4h-4zM1756 490h4v4h-4zM1756 620h4v4h-4z"/><text x="1572" y="313">1.145</text><text x="1710" y="395">1.145</text><text x="1765" y="496">1.145</text><text x="1765" y="625">1.145</text></g>
<text x="1632" y="411" fill="#c4e4c4">1.914</text>
<path d="M1688 438L1704 446V454H1688z" fill="#5c5cf0"/><path d="M1693 452l18 2V651h-18z" fill="#6e6eff"/><path d="M1695 453V648M1710 455V650" stroke="#5252e0" stroke-width="3"/><circle cx="1703" cy="519" r="2" fill="#a9cdf5"/>
<path d="M1701 450h3v3h-3z" fill="red"/><path d="M1691 661l12-8 12 8-12 6z" fill="#008c00"/><path d="M1690 644L1704 650" stroke="red" stroke-width="2"/><path d="M1690 656L1703 650" stroke="#0e0" stroke-width="2"/><path d="M1703 650V678" stroke="#0ff" stroke-width="2"/><path d="M1700 676h6l-3 10z" fill="#0cc"/>
<g class="n"><text x="1700" y="699" fill="#0ff">Z</text><g fill="#fff"><text x="295" y="118">CC6 : Wind, y</text><text x="295" y="132">Cargas [kN/m]</text></g></g></svg>`;
});

define('rs-tablepane', `:host{display:block;padding-top:4px;background:#cfd3dd;border-top:2px solid #f4f6fa}
header{display:flex;align-items:center;height:20px;background:#b9bfc9;padding:0 5px;color:#4a4d55}span{flex:1}header rs-icon{--icon:9px;margin-left:8px;color:#666}
div{height:9px;overflow:hidden;display:flex;padding-left:9px;background:#e6ebf6}b{width:22px;height:10px;padding:0 3px;flex:none}b.on{background:#fdc777}s{width:7px;flex:none}b rs-icon{margin-top:-4px}`,
  `<header><span>1.1 Nós</span><rs-icon name="pin"></rs-icon><rs-icon name="x"></rs-icon></header><div>${'*g1 g1 g1 g2 g2 | g3 g3 | *g1 g3 g2 | g2 g2 g2 | g2 | g3 g3 g3'.split(' ').map(n => n === '|' ? '<s></s>' : `<b class="${n[0] === '*' ? 'on' : ''}"><rs-icon name="${n.replace('*', '')}"></rs-icon></b>`).join('')}</div>`);

define('rs-app', `:host{display:flex;flex-direction:column;position:relative;overflow:hidden}
.main{flex:1;display:flex;min-height:0;gap:4px}.right{flex:1;min-width:0;display:flex;flex-direction:column}
.status{height:21px;flex:none;border-top:1px solid #a5abb7;background:linear-gradient(#dfe3ea,#a9b0bc 55%,#b9bfc9);display:flex;justify-content:flex-end;gap:73px;padding:2px 72px 0 0}.status i{width:1px;background:#8e95a3}`,
  `<rs-titlebar></rs-titlebar><rs-menubar></rs-menubar>
<rs-toolbar items="new open cabinet cabinetb save report print preview | undo redo | quad ell ring selr win | *tree *tab | load #"></rs-toolbar>
<rs-toolbar items="node v mem1 mem2 mem3 supp mem4 | nload mload tload imp | dim v note | grid | comb v : hand zoom zoomx cube cubes | ax ay"></rs-toolbar>
<div class="main"><rs-navigator></rs-navigator><div class="right"><rs-viewport></rs-viewport><rs-tablepane></rs-tablepane></div></div>
<div class="status"><i></i><i></i><i></i></div><slot></slot>`);

define('rs-group', `:host{display:flex;flex-direction:column;min-height:0;flex:none}
h3{margin:0 0 1px;padding-left:2px;font:11px/16px "Liberation Sans",sans-serif;color:#1e4872;background:#dae4f3;border-right:1px solid #a9a8ee;clip-path:polygon(0 0,calc(100% - 11px) 0,100% 11px,100% 100%,0 100%);white-space:nowrap}
.b{flex:1;min-height:0;background:#eff3f9;border:1px solid #a9a8ee;border-width:0 1px 1px 0;border-left:1px solid #dae4f3}.n{border-top:1px solid #dae4f3}`,
  el => `${el.hasAttribute('heading') ? `<h3>${el.getAttribute('heading')}</h3>` : ''}<div class="b ${el.hasAttribute('heading') ? '' : 'n'}"><slot></slot></div>`);

define('rs-choice', `:host{display:block;height:21px;font-size:11px}:host([multi]){height:32px;padding-top:3px}
label{display:flex;align-items:center;gap:2px;height:100%;white-space:nowrap}:host([multi]) label{align-items:flex-start;line-height:13px;height:26px}
input{appearance:none;width:13px;height:13px;margin:0;border:1px solid #333;background:#fff;flex:none;display:grid;place-items:center}
input[type=radio]{border-radius:50%}input[type=checkbox]:checked::after{content:"";width:9px;height:4px;border:solid #333;border-width:0 0 1px 1px;rotate:-48deg;margin-top:-3px}
input[type=radio]:checked::after{content:"";width:7px;height:7px;border-radius:50%;background:#333}
:host([disabled]){color:#8d8d8d}:host([disabled]) input{border-color:#c3c3c3}:host([disabled]) input:checked::after{background:#c3c3c3}
:host([focused]) .t{outline:1px dotted #000;line-height:14px}:host([type=radio]) label{gap:3px}`,
  el => `<label><input type="${el.getAttribute('type')}" ${el.hasAttribute('checked') ? 'checked' : ''} ${el.hasAttribute('disabled') ? 'disabled' : ''} ${el.hasAttribute('name-only') ? `aria-label="${el.getAttribute('name-only')}"` : ''}><span class="t"><slot></slot></span></label>`);

define('rs-spin', `:host{display:flex;width:60px;height:20px;border:1px solid #b5b5b5;background:#f0f0f0;box-sizing:border-box}:host([wide]){width:84px}
input{flex:1;min-width:0;border:0;padding:0 2px;background:#fff;font:inherit}div{display:flex;flex-direction:column;width:17px;padding:1px}
button{flex:1;border:0;padding:0;font-size:6px;line-height:1;color:#555;background:#ececec;border-left:1px solid #d0d0d0;border-top:1px solid #d8d8d8}`,
  el => `<input type="text" aria-label="${el.getAttribute('label') || 'Fator'}"><div><button aria-label="Aumentar">▲</button><button aria-label="Diminuir">▼</button></div>`);

define('rs-button', `:host{display:block;flex:none}button{display:grid;place-items:center;width:25px;height:21px;padding:0;border:1px solid #adadad;background:#e1e1e1}:host([flat]) button{background:#cfcfcf;border-color:#c0c0c0}`,
  el => `<button aria-label="${el.getAttribute('label')}"><rs-icon name="${el.getAttribute('icon')}"></rs-icon></button>`);

define('rs-factor', `:host{display:block;font-size:11px}.r{display:flex;align-items:center;height:22px;padding-left:17px}.r rs-choice{width:203px}.r rs-choice.s{width:117px}
.u{margin-left:6px;color:#999}:host([on]) .u{color:#111}
label{display:flex;align-items:center;gap:3px;height:21px;white-space:nowrap}input{appearance:none;width:13px;height:13px;margin:0;border:1px solid #333;background:#fff;flex:none}`,
  `<label><input type="checkbox"><span><slot></slot></span></label>
<div class="r"><rs-choice type="radio" checked disabled>Multiplicar tudo pelo fator:</rs-choice><rs-spin></rs-spin><span class="u">[-]</span></div>
<div class="r"><rs-choice class="s" type="radio" disabled>Individualmente...</rs-choice><rs-button flat icon="edit" label="Editar individualmente"></rs-button></div>`);

define('rs-member-list', `:host{display:block;font-size:11px;padding:4px 3px 0 2px}p{margin:0 0 3px 86px;line-height:15px}
div{display:flex;align-items:center;height:21px}rs-choice{width:87px}input{flex:1;min-width:0;height:20px;border:1px solid #777;padding:0 5px;font:inherit;background:#fff;margin-right:3px}`,
  `<p>Lista (p. ex. '3-5,12')</p><div><rs-choice type="checkbox" checked>Barras:</rs-choice><input aria-label="Lista de barras" value="56"><rs-button icon="pick" label="Selecionar barras"></rs-button></div>`);

define('rs-tabs', `:host{display:flex;align-items:flex-end;height:18px;font-size:11px}
a{height:100%;display:flex;align-items:center;color:#000;text-decoration:none;background:#f0f0f0;border:1px solid #d9d9d9;border-width:1px 1px 0 0;padding:0 0 0 5px;white-space:nowrap}
a:first-child{border-left-width:1px;padding-left:4px}a.on{background:#fff;height:calc(100% + 3px);margin-bottom:-1px;padding-bottom:3px;border-left-width:1px}`,
  el => el.getAttribute('items').split('|').map((t, i) => `<a href="#" style="width:${el.getAttribute('widths').split(' ')[i]}px" class="${+el.getAttribute('active') === i ? 'on' : ''}">${t}</a>`).join(''));

const CASES = ['1.35*CC1 + 1.5*CC2 + 0.9*CC4 +', '1.35*CC1 + 1.5*CC4 + CC8', '1.35*CC1 + 0.75*CC2 + 1.5*CC4', 'CC1 + 1.5*CC2 + 0.9*CC4 + CC8', 'CC1 + 1.5*CC4 + CC8', 'CC1 + 0.75*CC2 + 1.5*CC4 + CC8', '1.35*CC1 + 1.5*CC2 + 0.9*CC6 +', '1.35*CC1 + 1.5*CC6 + CC9', '1.35*CC1 + 0.75*CC2 + 1.5*CC6', 'CC1 + 1.5*CC2 + 0.9*CC6 + CC9', 'CC1 + 1.5*CC6 + CC9', 'CC1 + 0.75*CC2 + 1.5*CC6 + CC9', '1.35*CC1 + 1.5*CC3 + 0.9*CC4 +', '1.35*CC1 + 0.75*CC3 + 1.5*CC4', 'CC1 + 1.5*CC3 + 0.9*CC4 + CC8', 'CC1 + 0.75*CC3 + 1.5*CC4 + CC8', '1.35*CC1 + 1.5*CC5 + CC8', 'CC1 + 1.5*CC5 + CC8', '1.35*CC1 + 1.5*CC7 + CC9', 'CC1 + 1.5*CC7 + CC9', 'CC1 + CC2 + 0.6*CC4 + CC8', 'CC1 + CC2 + 0.6*CC5 + CC8', 'CC1 + CC2 + 0.6*CC6 + CC9', 'CC1 + CC2 + 0.6*CC7 + CC9', 'CC1 + CC3 + 0.6*CC4 + CC8', 'CC1 + CC3 + 0.6*CC5 + CC8', 'CC1 + CC3 + 0.6*CC6 + CC9', 'CC1 + CC3 + 0.6*CC7 + CC9', 'CC1 + CC4 + CC8', 'CC1 + CC5 + CC8'];
define('rs-caselist', `:host{display:block}.l{display:flex;height:565px;border-left:1px solid #999;border-top:1px solid #999;overflow:hidden;background:#fff;margin:-1px 1px 0 0}
.w{flex:1;min-width:0;overflow:hidden}table{border-collapse:separate;border-spacing:0;table-layout:fixed;width:100%;font:10px "DejaVu Sans",sans-serif;color:#1d4a9c}
td{height:19px;padding:0;white-space:nowrap;overflow:hidden;line-height:18px}td:first-child{width:76px;border-right:1px solid #000}td+td{padding-left:4px}
tr.s{background:#0078d7;color:#ff0}tr.s td:first-child{border-color:#fff}
span{display:inline-block;width:25px;height:12px;line-height:12px;text-align:center;margin:0 4px 0 0;background:#b0cc82;color:#222}tr.s span{background:#cf6464;color:#fff}
.f{display:flex;gap:5px;padding:6px 3px 0;height:30px;overflow:hidden}select{appearance:none;height:21px;width:150px;border:1px solid #777;background:linear-gradient(#d4d4d4,#d4d4d4) 4px 4px/25px 11px no-repeat #fff;padding:0 0 0 32px;font-size:11px;font-family:inherit;margin-left:3px}`,
  `<div class="l"><div class="w"><table>${CASES.map((c, i) => `<tr class="${i < 20 ? 's' : ''}"><td><span>${i < 20 ? 'STR' : 'S Ch'}</span>CO${i + 1}</td><td>${c}</td></tr>`).join('')}</table></div><rs-scroll list dir="v" skip="0" size="384"></rs-scroll></div>
<rs-scroll dir="h" size="106"></rs-scroll>
<div class="f"><rs-button icon="add" label="Nova"></rs-button><rs-button flat icon="copy" label="Copiar"></rs-button><rs-button icon="ab" label="Renumerar"></rs-button><select aria-label="Filtro"><option>Tudo</option></select></div>`);

define('rs-dialog', `:host{display:block;position:absolute;width:974px;box-sizing:border-box;border:1px solid #666;background:#f0f0f0;box-shadow:0 3px 16px rgba(0,0,0,.45);color:#000}
header{height:31px;background:#fff;display:flex;align-items:center;padding:0 10px 1px 8px}h2{font:inherit;font-size:12px;margin:0;flex:1}header button{all:unset;--icon:12px}
.tabs{padding:9px 0 0 8px}.page{margin:0 10px 0 7px;border:1px solid #d9d9d9;background:#fff;padding:9px 6px 10px 7px;display:grid;grid-template-columns:270px 1fr;gap:7px}
.c{display:flex;flex-direction:column;min-width:0;min-height:0}.top{display:grid;grid-template-columns:98px 389px 1fr;gap:7px;height:46px}
.f{display:flex;align-items:center;padding:4px 4px 0 2px;height:25px}
.f input{height:20px;border:2px solid #d0d0d0;font:10px "DejaVu Sans",sans-serif;background:#fff;padding:0 5px;min-width:0}
.no{width:46px;text-align:right;color:#777}.f input.name{flex:1;background:#efefef;margin:0 4px 0 7px}
.k{width:51px;height:20px;border:1px solid #999;border-right-color:#fff;border-bottom-color:#fff;padding:3px 5px}.k b{display:block;width:25px;background:#cf6464;color:#fff;font:10px/12px "DejaVu Sans",sans-serif;text-align:center}
rs-tabs.i{height:19px;margin:10px 0 0 1px}.inner{flex:1;border:1px solid #d9d9d9;border-left-color:#777;border-right-width:2px;padding:8px 4px 0 5px;display:grid;grid-template-columns:316px 1fr;gap:8px;min-height:0}
footer{display:flex;gap:5px;padding:11px 7px 6px}footer rs-button:first-child{margin-right:5px}`,
  el => `<header><h2>Editar casos e combinações de cargas</h2><button aria-label="Fechar"><rs-icon name="x"></rs-icon></button></header>
<div class="tabs"><rs-tabs active="4" widths="86 42 120 115 128 139" items="Casos de carga|Ações|Regras de combinação|Combinação de ações|Combinações de cargas|Combinações de resultados"></rs-tabs></div>
<div class="page"><div class="c"><rs-group heading="Combinações de carga existentes" style="flex:1"><rs-caselist></rs-caselist></rs-group></div>
<div class="c"><div class="top"><rs-group heading="CO nº"><div class="f"><input class="no" type="text" value="1" aria-label="CO nº"></div></rs-group>
<rs-group heading="Designação da combinações de carga"><div class="f"><span class="k"><b>STR</b></span><input class="name" type="text" aria-label="Designação"><rs-button icon="play" label="Escolher"></rs-button></div></rs-group>
<rs-group heading="A resolver"><div class="f"><rs-choice type="checkbox" checked name-only="A resolver"></rs-choice></div></rs-group></div>
<rs-tabs class="i" active="${el.getAttribute('subtab')}" widths="${el.getAttribute('subtab') === '1' ? '41 120 79' : '41 118 81'}" items="Geral|Parâmetros de cálculo|Alterar rigidez"></rs-tabs>
<div class="inner"><slot name="left"></slot><slot name="right"></slot></div></div></div>
<footer><rs-button icon="help" label="Ajuda"></rs-button><rs-button icon="book" label="Abrir"></rs-button><rs-button icon="saveas" label="Guardar"></rs-button></footer>`);

define('rs-annotations', `:host{position:absolute;left:0;top:0;pointer-events:none}svg{display:block}g{filter:drop-shadow(5px 5px 3px rgba(0,0,0,.45))}`,
  `<svg width="1919" height="1040" fill="none" stroke="#c00000" stroke-width="3" aria-hidden="true">
<rect x="931.500" y="79.500" width="126" height="19"/><rect x="1014.500" y="163.500" width="75" height="21"/><rect x="1180.500" y="372.500" width="107" height="20"/><rect x="1340.500" y="690.500" width="329" height="73"/>
<g><path d="M967 100C950 160 950 240 966 285C988 345 1040 370 1090 380Q1120 386 1150 387"/><path d="M1149 379.500L1164 388L1149 395z" fill="#c00000" stroke="none"/>
<path d="M1209 371L1073 202"/><path d="M1065 192L1080 199L1069 208z" fill="#c00000" stroke="none"/>
<path d="M1091 177C1170 182 1250 222 1313 263C1380 307 1432 372 1472 430C1504 477 1529 560 1529 605Q1529 640 1525 666"/><path d="M1523 679L1518 663L1533 666z" fill="#c00000" stroke="none"/></g></svg>`);
</script>
</body>
</html>
